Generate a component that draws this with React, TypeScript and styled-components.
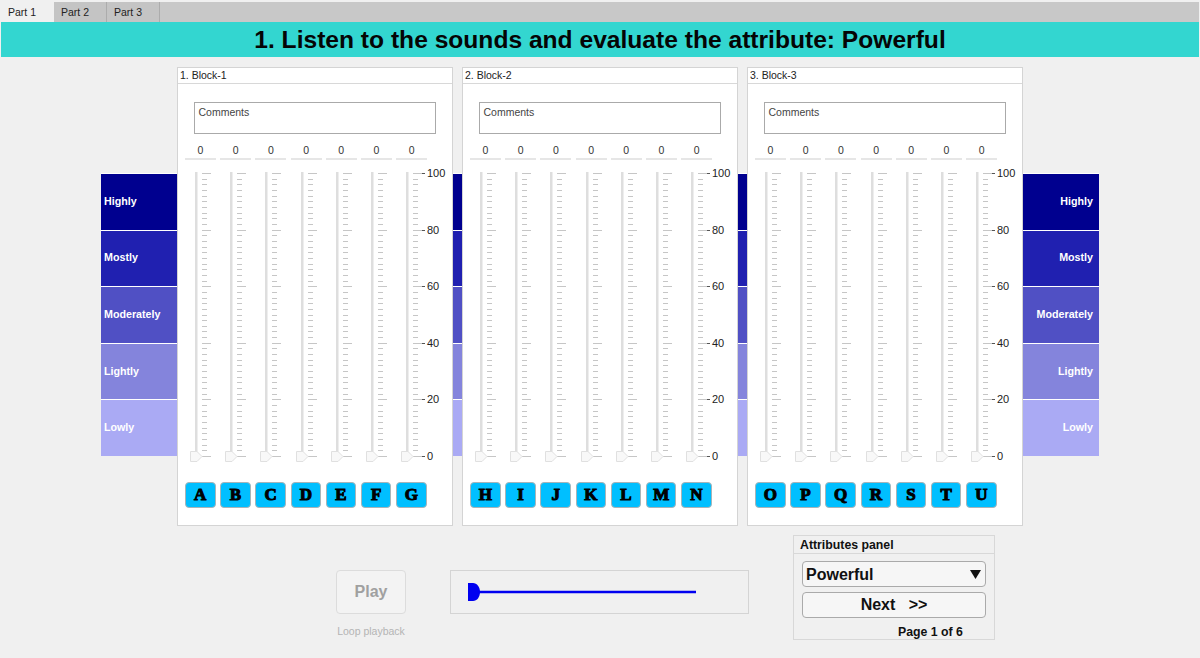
import React from 'react';
import styled, { createGlobalStyle } from 'styled-components';

const GlobalStyle = createGlobalStyle`
  html, body {
    margin: 0;
    padding: 0;
    background: #f0f0f0;
    overflow: hidden;
  }
  * {
    box-sizing: border-box;
  }
  body {
    font-family: "Liberation Sans", Arial, sans-serif;
    color: #111;
  }
`;

const Page = styled.div`
  width: 1200px;
  height: 658px;
  padding-top: 2px;
`;

const TabBar = styled.div`
  display: flex;
  height: 20px;
  margin: 0 1px;
  background: #c8c8c8;
`;

const Tab = styled.div<{ $active?: boolean }>`
  width: 53px;
  line-height: 20px;
  padding-left: 7px;
  font-size: 10.5px;
  color: #222;
  background: ${(p) => (p.$active ? '#f0f0f0' : '#c4c4c4')};
  border-right: 1px solid ${(p) => (p.$active ? '#f0f0f0' : '#acacac')};
`;

const Header = styled.h1`
  height: 35px;
  margin: 0 1px;
  background: #33d6d0;
  font-size: 24.6px;
  line-height: 35px;
  font-weight: 700;
  text-align: center;
  color: #050505;
`;

const Board = styled.div`
  display: flex;
  justify-content: center;
  margin-top: 10px;
`;

const Scale = styled.div<{ $width: number; $right?: boolean }>`
  display: flex;
  flex-direction: column;
  width: ${(p) => p.$width}px;
  height: 283px;
  margin-top: 106px;
  text-align: ${(p) => (p.$right ? 'right' : 'left')};
`;

const Band = styled.div<{ $color: string }>`
  flex: 1;
  display: flex;
  align-items: center;
  padding: 0 6px 2px 3px;
  background: ${(p) => p.$color};
  border-top: 1px solid #fff;
  font-size: 10.7px;
  font-weight: 700;
  color: #fff;
`;

const BandText = styled.span`
  width: 100%;
`;

const BlockCard = styled.section`
  width: 276px;
  height: 459px;
  background: #fff;
  border: 1px solid #d4d4d4;
`;

const BlockTitle = styled.div`
  height: 16px;
  padding-left: 2px;
  line-height: 14px;
  font-size: 10.5px;
  color: #222;
  border-bottom: 1px solid #d8d8d8;
`;

const BlockBody = styled.div`
  padding: 0 7px;
`;

const Comments = styled.div`
  width: 242px;
  height: 32px;
  margin: 18px 0 0 8.5px;
  padding: 3px 4px;
  font-size: 10.5px;
  color: #444;
  border: 1px solid #aaa;
`;

const SevenCols = styled.div`
  display: grid;
  grid-template-columns: repeat(7, 35.2px);
`;

const ValueRow = styled(SevenCols)`
  margin-top: 9px;
`;

const Value = styled.div`
  width: 31px;
  height: 17px;
  font-size: 10.5px;
  line-height: 15px;
  text-align: center;
  color: #333;
  border-bottom: 2px solid #e6e6e6;
`;

const SliderRow = styled(SevenCols)`
  margin-top: 10px;
  height: 292px;
`;

const SliderSvg = styled.svg`
  display: block;
  overflow: visible;
`;

const ScaleText = styled.text`
  font-family: "Liberation Sans", Arial, sans-serif;
  font-size: 11px;
  fill: #222;
`;

const LetterRow = styled(SevenCols)`
  margin-top: 20px;
`;

const LetterButton = styled.button`
  width: 30.5px;
  height: 26px;
  padding: 0;
  background: #00bfff;
  border: 1px solid #a8b4b8;
  border-radius: 4px;
  font-family: "Liberation Serif", "Times New Roman", serif;
  font-size: 17px;
  font-weight: 700;
  color: #000;
  -webkit-text-stroke: 1px #000;
`;

const Footer = styled.div`
  display: flex;
  align-items: flex-start;
  padding-left: 336px;
  margin-top: 9px;
`;

const PlayColumn = styled.div`
  width: 70px;
  margin-top: 35px;
`;

const PlayButton = styled.button`
  display: block;
  width: 70px;
  height: 44px;
  padding: 0;
  font-family: inherit;
  font-size: 16px;
  font-weight: 700;
  color: #a0a0a0;
  background: #f3f3f3;
  border: 1px solid #dcdcdc;
  border-radius: 4px;
`;

const LoopLabel = styled.div`
  margin-top: 11px;
  font-size: 10.5px;
  white-space: nowrap;
  text-align: center;
  color: #b4b4b4;
`;

const ProgressBox = styled.div`
  width: 299px;
  height: 44px;
  margin: 35px 44px 0;
  border: 1px solid #d4d4d4;
`;

const AttributesPanel = styled.div`
  width: 202px;
  height: 105px;
  border: 1px solid #d8d8d8;
`;

const PanelTitle = styled.div`
  height: 18px;
  padding-left: 6px;
  font-size: 12.3px;
  font-weight: 700;
  line-height: 18px;
  border-bottom: 1px solid #d8d8d8;
`;

const PanelBody = styled.div`
  padding: 7px 8px 0;
`;

const SelectBox = styled.div`
  display: flex;
  align-items: center;
  justify-content: space-between;
  height: 26px;
  padding: 1px 4px 0 3px;
  font-size: 16px;
  font-weight: 700;
  background: #f6f6f6;
  border: 1px solid #aaa;
  border-radius: 4px;
`;

const NextButton = styled.button`
  display: block;
  width: 100%;
  height: 26px;
  margin-top: 5px;
  padding: 0;
  font-family: inherit;
  font-size: 16px;
  font-weight: 700;
  color: #111;
  white-space: pre;
  background: #f6f6f6;
  border: 1px solid #aaa;
  border-radius: 4px;
`;

const PageCount = styled.div`
  margin-top: 7px;
  padding-left: 96px;
  font-size: 12.3px;
  font-weight: 700;
`;

const bands = [
  { label: 'Highly', color: '#00008f' },
  { label: 'Mostly', color: '#2020b0' },
  { label: 'Moderately', color: '#5050c4' },
  { label: 'Lightly', color: '#8484dc' },
  { label: 'Lowly', color: '#aaaaf4' },
];

const blocks = [
  { title: '1. Block-1', letters: 'ABCDEFG' },
  { title: '2. Block-2', letters: 'HIJKLMN' },
  { title: '3. Block-3', letters: 'OPQRSTU' },
];

const TICK_TOP = 3;
const TICK_STEP = 5.66;

function Slider({ withScale }: { withScale: boolean }) {
  const ticks = Array.from({ length: 51 }, (_, i) => i);
  return (
    <SliderSvg width={35} height={292}>
      <rect x={10} y={2} width={2.5} height={285} fill="#dedede" />
      {ticks.map((i) => {
        const major = i % 10 === 0;
        const y = Math.round(TICK_TOP + i * TICK_STEP) + 0.5;
        return (
          <g key={i}>
            <line x1={17} x2={major ? 26 : 22} y1={y} y2={y} stroke="#c6c6c6" />
            {withScale && major && (
              <>
                <line x1={26} x2={29} y1={y} y2={y} stroke="#555" />
                <ScaleText x={31} y={y + 3.5}>{100 - i * 2}</ScaleText>
              </>
            )}
          </g>
        );
      })}
      <path d="M5.5 281.5h6.5l5 5-5 5h-6.5z" fill="#f8f8f8" stroke="#e0e0e0" />
    </SliderSvg>
  );
}

function Block({ title, letters }: { title: string; letters: string }) {
  const list = letters.split('');
  return (
    <BlockCard>
      <BlockTitle>{title}</BlockTitle>
      <BlockBody>
        <Comments>Comments</Comments>
        <ValueRow>
          {list.map((l) => <Value key={l}>0</Value>)}
        </ValueRow>
        <SliderRow>
          {list.map((l, i) => <Slider key={l} withScale={i === 6} />)}
        </SliderRow>
        <LetterRow>
          {list.map((l) => <LetterButton key={l} type="button">{l}</LetterButton>)}
        </LetterRow>
      </BlockBody>
    </BlockCard>
  );
}

function RatingScale({ width, right, labels }: { width: number; right?: boolean; labels?: boolean }) {
  return (
    <Scale $width={width} $right={right}>
      {bands.map((b) => (
        <Band key={b.label} $color={b.color}>
          {labels && <BandText>{b.label}</BandText>}
        </Band>
      ))}
    </Scale>
  );
}

function App() {
  return (
    <Page>
      <GlobalStyle />
      <TabBar>
        <Tab $active>Part 1</Tab>
        <Tab>Part 2</Tab>
        <Tab>Part 3</Tab>
      </TabBar>
      <Header>1. Listen to the sounds and evaluate the attribute: Powerful</Header>
      <Board>
        <RatingScale width={76} labels />
        <Block title={blocks[0].title} letters={blocks[0].letters} />
        <RatingScale width={9} />
        <Block title={blocks[1].title} letters={blocks[1].letters} />
        <RatingScale width={9} />
        <Block title={blocks[2].title} letters={blocks[2].letters} />
        <RatingScale width={76} right labels />
      </Board>
      <Footer>
        <PlayColumn>
          <PlayButton type="button">Play</PlayButton>
          <LoopLabel>Loop playback</LoopLabel>
        </PlayColumn>
        <ProgressBox>
          <svg width={297} height={42}>
            <line x1={24} x2={245} y1={21} y2={21} stroke="#0000f0" strokeWidth={2.5} />
            <path d="M17 12h5c4 0 7 4 7 9s-3 9-7 9h-5z" fill="#0000f0" />
          </svg>
        </ProgressBox>
        <AttributesPanel>
          <PanelTitle>Attributes panel</PanelTitle>
          <PanelBody>
            <SelectBox>
              <span>Powerful</span>
              <svg width={11} height={9}>
                <path d="M0 0h11L5.5 9z" fill="#111" />
              </svg>
            </SelectBox>
            <NextButton type="button">{'Next   >>'}</NextButton>
            <PageCount>Page 1 of 6</PageCount>
          </PanelBody>
        </AttributesPanel>
      </Footer>
    </Page>
  );
}

export default App;
